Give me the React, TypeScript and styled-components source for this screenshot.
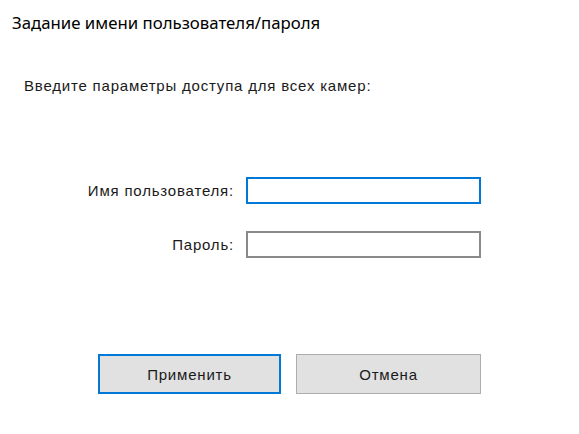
import styled, { createGlobalStyle } from 'styled-components';

const GlobalStyle = createGlobalStyle`
  html, body {
    margin: 0;
    padding: 0;
    background: #ffffff;
  }
`;

const Window = styled.div`
  box-sizing: border-box;
  width: 580px;
  height: 434px;
  background: #ffffff;
  border-right: 1px solid #d4d4d4;
  display: flex;
  flex-direction: column;
  overflow: hidden;
`;

const Title = styled.div`
  font-family: 'Noto Sans', 'Open Sans', sans-serif;
  font-size: 16.8px;
  line-height: 22px;
  color: #000000;
  padding: 12px 0 0 12px;
`;

const Prompt = styled.div`
  font-family: 'Liberation Sans', Arial, sans-serif;
  font-size: 15px;
  letter-spacing: 0.8px;
  line-height: 16px;
  color: #1a1a1a;
  margin: 44px 0 0 24px;
`;

const Form = styled.div`
  display: grid;
  grid-template-columns: 234px 235px;
  column-gap: 12px;
  row-gap: 27px;
  align-items: center;
  margin-top: 83px;
`;

const Label = styled.label`
  font-family: 'Liberation Sans', Arial, sans-serif;
  font-size: 15px;
  letter-spacing: 0.8px;
  color: #1a1a1a;
  text-align: right;
`;

const Field = styled.input<{ $focused?: boolean }>`
  box-sizing: border-box;
  width: 235px;
  height: 27px;
  margin: 0;
  padding: 2px 4px;
  font-family: 'Liberation Sans', Arial, sans-serif;
  font-size: 14px;
  background: #ffffff;
  border: ${(p) => (p.$focused ? '2px solid #0078d7' : '2px solid #8a8a8a')};
  outline: none;
`;

const Buttons = styled.div`
  display: flex;
  gap: 15px;
  margin: 96px 0 0 98px;
`;

const Button = styled.button<{ $primary?: boolean }>`
  box-sizing: border-box;
  width: ${(p) => (p.$primary ? '183px' : '185px')};
  height: 40px;
  margin: 0;
  padding: 0;
  background: #e1e1e1;
  border: ${(p) => (p.$primary ? '2px solid #0078d7' : '1px solid #adadad')};
  font-family: 'Liberation Sans', Arial, sans-serif;
  font-size: 15px;
  letter-spacing: 0.8px;
  color: #1a1a1a;
  cursor: pointer;
`;

export default function App() {
  return (
    <>
      <GlobalStyle />
      <Window>
        <Title>Задание имени пользователя/пароля</Title>
        <Prompt>Введите параметры доступа для всех камер:</Prompt>
        <Form>
          <Label htmlFor="user">Имя пользователя:</Label>
          <Field id="user" $focused />
          <Label htmlFor="pass">Пароль:</Label>
          <Field id="pass" type="password" />
        </Form>
        <Buttons>
          <Button $primary>Применить</Button>
          <Button>Отмена</Button>
        </Buttons>
      </Window>
    </>
  );
}
